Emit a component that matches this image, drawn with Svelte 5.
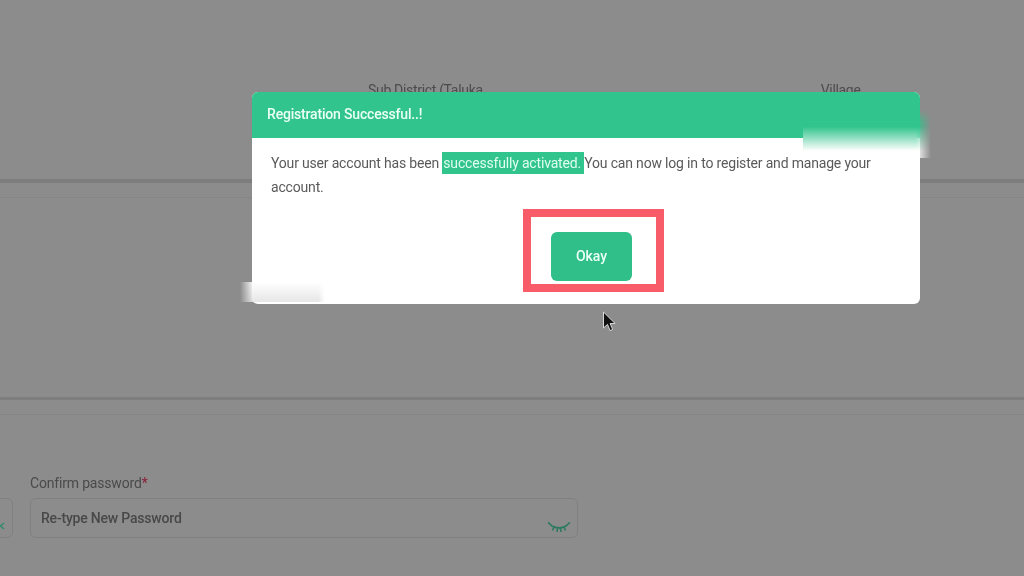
<script>
    const heading = 'Registration Successful..!'
</script>

<div class="page">
    <section class="location">
        <span class="sub">Sub District (Taluka</span>
        <span class="village">Village</span>
    </section>
    <div class="band"></div>
    <section class="middle"></section>
    <div class="band"></div>
    <section class="passwords">
        <div class="stub">
            <svg width="6" height="8" viewBox="0 0 6 8"><path d="M5 1 1.5 4 5 7" fill="none" stroke="#2f8a68" stroke-width="1.3"/></svg>
        </div>
        <div class="field">
            <label for="confirm">Confirm password<b>*</b></label>
            <div class="input">
                <input id="confirm" placeholder="Re-type New Password" readonly>
                <svg class="eye" width="24" height="12" viewBox="0 0 24 12">
                    <path d="M1 1.500c2 1 2.500 2.500 4 3.500 4 2.500 10 2.500 14 0 1.500-1 2-2.500 4-3.500M7 6 5.500 9.500M17 6l1.500 3.500M10.500 7.500 10 11M13.500 7.500l.5 3.500" fill="none" stroke="#2b7a5e" stroke-width="1.6"/>
                </svg>
            </div>
        </div>
    </section>

    <div class="modal">
        <header>{heading}</header>
        <div class="body">
            <p>Your user account has been <mark>successfully activated.&nbsp;</mark>You can now log in to register and manage your account.</p>
            <div class="actions">
                <div class="highlight">
                    <button>Okay</button>
                </div>
            </div>
        </div>
        <div class="smudge top"></div>
        <div class="smudge bottom"></div>
    </div>

    <svg class="cursor" width="14" height="22" viewBox="0 0 14 22">
        <path d="M1.500 1v16l4-3.600 2.600 6.200 2.600-1.100-2.600-6h5z" fill="#111" stroke="#d8d8d8" stroke-width="1"/>
    </svg>
</div>

<style>
    :global(body) {
        margin: 0;
        background: #8c8c8c;
    }

    .page {
        position: relative;
        width: 1024px;
        height: 576px;
        overflow: hidden;
        background: #8c8c8c;
        font-family: Roboto, "Liberation Sans", sans-serif;
        letter-spacing: -0.18px;
        filter: blur(0.5px);
    }

    .location {
        box-sizing: border-box;
        height: 183px;
        padding: 81px 0 0 368px;
        display: flex;
        gap: 338px;
        border-bottom: 4px solid #7d7d7d;
        color: #4c4c4c;
        font-size: 14px;
        line-height: 18px;
        letter-spacing: -0.32px;
    }

    .band {
        height: 14px;
        border-bottom: 1px solid #858585;
    }

    .middle {
        box-sizing: border-box;
        height: 202px;
        border-bottom: 3px solid #7e7e7e;
    }

    .passwords {
        display: flex;
        gap: 17px;
        padding-top: 57px;
        margin-left: -120px;
    }

    .stub {
        box-sizing: border-box;
        width: 133px;
        height: 40px;
        margin-top: 26px;
        display: flex;
        align-items: flex-end;
        justify-content: flex-end;
        padding: 0 7px 7px 0;
        border: 1px solid #808080;
        border-radius: 6px;
    }

    .field {
        width: 548px;
    }

    label {
        display: block;
        height: 26px;
        color: #4a4a4a;
        font-size: 14px;
        line-height: 22px;
    }

    label b {
        color: #8a1f3a;
        font-weight: 400;
    }

    .input {
        position: relative;
        box-sizing: border-box;
        height: 40px;
        border: 1px solid #808080;
        border-radius: 6px;
    }

    input {
        box-sizing: border-box;
        width: 100%;
        height: 100%;
        padding: 0 10px;
        border: 0;
        outline: 0;
        background: none;
        font: 500 14px Roboto, "Liberation Sans", sans-serif;
        letter-spacing: -0.2px;
    }

    input::placeholder {
        color: #484848;
        opacity: 1;
    }

    .eye {
        position: absolute;
        right: 6px;
        bottom: 4px;
    }

    .modal {
        position: absolute;
        left: 252px;
        top: 92px;
        width: 668px;
        height: 212px;
        border-radius: 6px;
        background: #fff;
    }

    header {
        box-sizing: border-box;
        height: 46px;
        padding: 13px 15px;
        border-radius: 6px 6px 0 0;
        background: #32c48d;
        color: #eafff6;
        font-size: 14px;
        font-weight: 500;
        line-height: 18px;
    }

    .body {
        padding: 13px 19px 0;
    }

    p {
        margin: 0;
        width: 620px;
        color: #5a5a5a;
        font-size: 14px;
        line-height: 24px;
    }

    mark {
        padding: 3px 0 3px 1px;
        background: #32c48d;
        color: #dffdf0;
    }

    .actions {
        display: flex;
        justify-content: center;
        margin-top: 10px;
        padding-left: 15px;
    }

    .highlight {
        box-sizing: border-box;
        width: 141px;
        height: 83px;
        padding: 15px 20px;
        border: 8px solid #f85c68;
    }

    button {
        display: block;
        width: 81px;
        height: 49px;
        padding: 0 0 2px;
        border: 0;
        border-radius: 6px;
        background: #30bf88;
        color: #eafff6;
        font: 500 14px Roboto, "Liberation Sans", sans-serif;
    }

    .smudge {
        position: absolute;
    }

    .smudge.top {
        left: 551px;
        top: 18px;
        width: 128px;
        height: 48px;
        background: linear-gradient(#32c48d 35%, #fff 85%);
        -webkit-mask-image: linear-gradient(to right, #000 88%, transparent), linear-gradient(transparent, #000 25%);
        mask-image: linear-gradient(to right, #000 88%, transparent), linear-gradient(transparent, #000 25%);
        -webkit-mask-composite: source-in;
        mask-composite: intersect;
    }

    .smudge.bottom {
        left: -12px;
        top: 190px;
        width: 85px;
        height: 20px;
        background: linear-gradient(#fff, #e6e6e6);
        -webkit-mask-image: linear-gradient(to right, transparent, #000 16%, #000 92%, transparent);
        mask-image: linear-gradient(to right, transparent, #000 16%, #000 92%, transparent);
    }

    .cursor {
        position: absolute;
        left: 602px;
        top: 311px;
    }
</style>
